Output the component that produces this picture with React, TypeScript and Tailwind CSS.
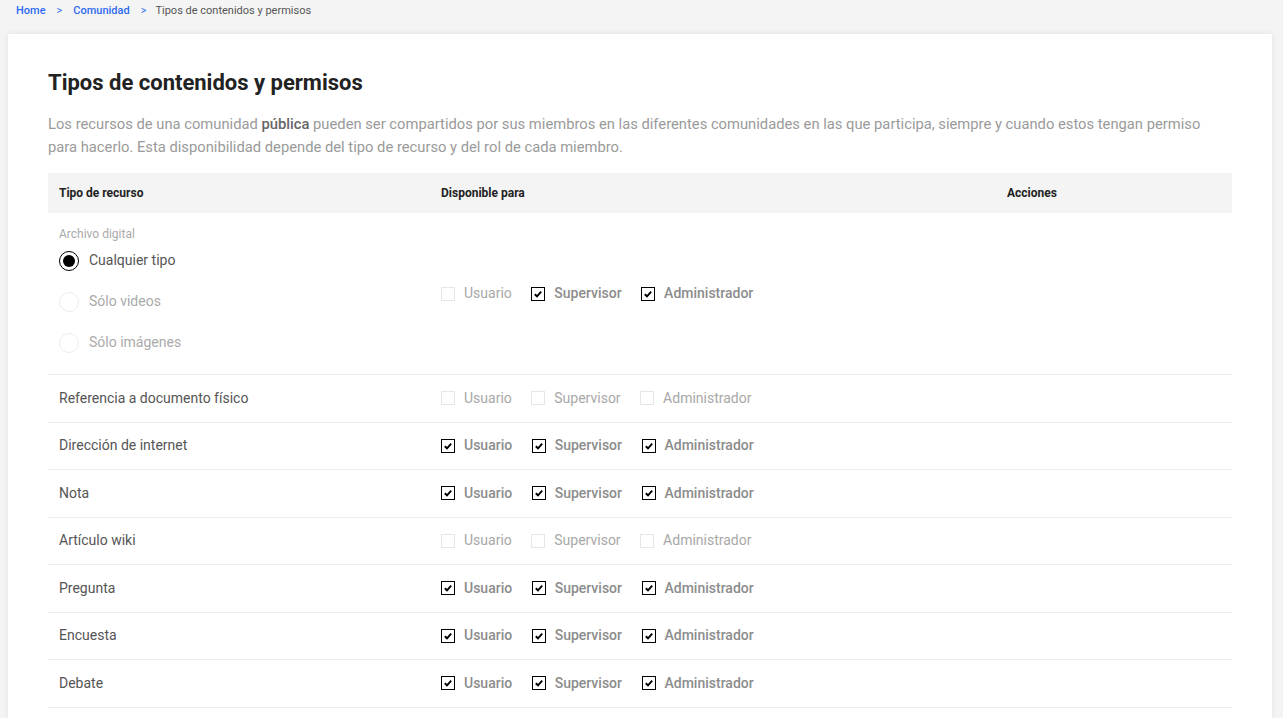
type Perm = { usuario: boolean; supervisor: boolean; administrador: boolean };

type Row = { name: string; perm: Perm };

const rows: Row[] = [
  { name: "Referencia a documento físico", perm: { usuario: false, supervisor: false, administrador: false } },
  { name: "Dirección de internet", perm: { usuario: true, supervisor: true, administrador: true } },
  { name: "Nota", perm: { usuario: true, supervisor: true, administrador: true } },
  { name: "Artículo wiki", perm: { usuario: false, supervisor: false, administrador: false } },
  { name: "Pregunta", perm: { usuario: true, supervisor: true, administrador: true } },
  { name: "Encuesta", perm: { usuario: true, supervisor: true, administrador: true } },
  { name: "Debate", perm: { usuario: true, supervisor: true, administrador: true } },
];

const Check = ({ checked, label }: { checked: boolean; label: string }) => (
  <label className="flex items-center gap-[9px]">
    {checked ? (
      <span className="flex h-[14px] w-[14px] items-center justify-center border border-black bg-white">
        <svg width="10" height="10" viewBox="0 0 10 10">
          <path d="M1.8 5.2 L4 7.3 L8.2 2.6" fill="none" stroke="#000" strokeWidth="1.9" />
        </svg>
      </span>
    ) : (
      <span className="h-[14px] w-[14px] border border-[#e6e6e6] bg-white" />
    )}
    <span className={checked ? "font-medium text-[#8c8c8c]" : "text-[#a8a8a8]"}>{label}</span>
  </label>
);

const Perms = ({ perm }: { perm: Perm }) => (
  <div className="flex items-center gap-[19.5px] pl-[11px] text-[14px]">
    <Check checked={perm.usuario} label="Usuario" />
    <Check checked={perm.supervisor} label="Supervisor" />
    <Check checked={perm.administrador} label="Administrador" />
  </div>
);

const Radio = ({ checked, label }: { checked: boolean; label: string }) => (
  <div className="flex h-[41px] items-center gap-[10px]">
    {checked ? (
      <span className="flex h-[20px] w-[20px] items-center justify-center rounded-full border-[1.5px] border-black">
        <span className="h-[12px] w-[12px] rounded-full bg-black" />
      </span>
    ) : (
      <span className="h-[20px] w-[20px] rounded-full border border-[#ececec]" />
    )}
    <span className={checked ? "text-[14px] text-[#555]" : "text-[14px] text-[#aaa]"}>{label}</span>
  </div>
);

export default function App() {
  return (
    <div className="min-h-screen bg-[#f4f4f4] font-['Roboto',sans-serif]">
      <nav className="flex h-[34px] items-start gap-[11px] px-[16px] pt-[3px] text-[11px]">
        <span className="font-medium text-[#2e6bf0]">Home</span>
        <span className="text-[#2e6bf0]">&gt;</span>
        <span className="font-medium text-[#2e6bf0]">Comunidad</span>
        <span className="text-[#2e6bf0]">&gt;</span>
        <span className="-ml-[2px] text-[#555]">Tipos de contenidos y permisos</span>
      </nav>
      <main className="mx-[8px] w-[1264px] bg-white px-[40px] pt-[32px] pb-[10px] shadow-[0_0_6px_rgba(0,0,0,0.08)]">
        <h1 className="text-[22px] font-bold text-[#222]">Tipos de contenidos y permisos</h1>
        <p className="mt-[14px] w-[1172px] text-[14.75px] leading-[23px] text-[#9a9a9a]">
          Los recursos de una comunidad <span className="font-medium text-[#666]">pública</span> pueden ser compartidos por sus miembros en las diferentes comunidades en las que participa, siempre y cuando estos tengan permiso para hacerlo. Esta disponibilidad depende del tipo de recurso y del rol de cada miembro.
        </p>
        <div className="mt-[14px] w-[1184px]">
          <div className="grid h-[40px] grid-cols-[382px_566px_236px] items-center bg-[#f4f4f4] text-[12px] font-bold text-[#222]">
            <div className="pl-[11px]">Tipo de recurso</div>
            <div className="pl-[11px]">Disponible para</div>
            <div className="pl-[11px]">Acciones</div>
          </div>
          <div className="grid h-[162px] grid-cols-[382px_566px_236px] items-center border-b border-[#ececec]">
            <div className="self-start pl-[11px] pt-[12px]">
              <div className="text-[12px] leading-[18px] text-[#aaa]">Archivo digital</div>
              <div className="-mt-[3px]">
                <Radio checked label="Cualquier tipo" />
                <Radio checked={false} label="Sólo videos" />
                <Radio checked={false} label="Sólo imágenes" />
              </div>
            </div>
            <Perms perm={{ usuario: false, supervisor: true, administrador: true }} />
            <div />
          </div>
          {rows.map((row) => (
            <div
              key={row.name}
              className="grid h-[47.5px] grid-cols-[382px_566px_236px] items-center border-b border-[#ececec]"
            >
              <div className="pl-[11px] text-[14px] text-[#555]">{row.name}</div>
              <Perms perm={row.perm} />
              <div />
            </div>
          ))}
        </div>
      </main>
    </div>
  );
}
